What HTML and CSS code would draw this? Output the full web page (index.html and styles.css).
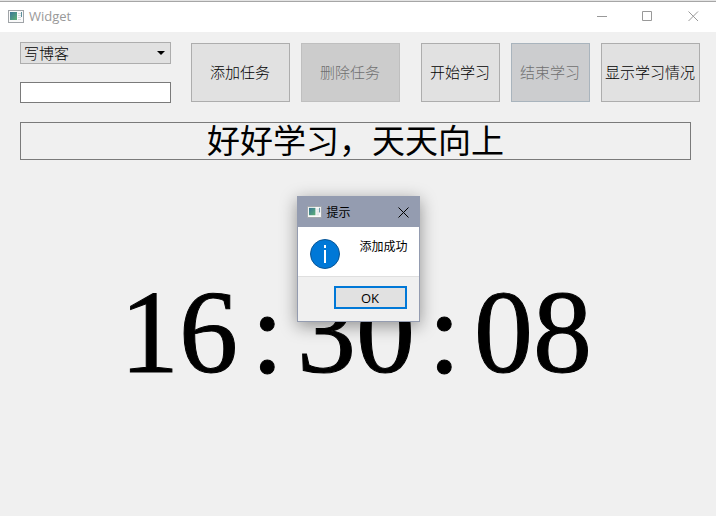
FILE: index.html
```html
<!DOCTYPE html>
<html lang="zh-CN">
<head>
<meta charset="utf-8">
<title>Widget</title>
<link rel="stylesheet" href="styles.css">
</head>
<body>
<svg class="defs" width="0" height="0" aria-hidden="true">
  <defs>
    <linearGradient id="pane" x1="0" y1="0" x2="1" y2="1">
      <stop offset="0" stop-color="#3a7698"/>
      <stop offset="1" stop-color="#5db075"/>
    </linearGradient>
    <symbol id="app" viewBox="0 0 16 13">
      <rect x="0.5" y="0.5" width="15" height="12" fill="#fafafa" stroke="#a0a4a8"/>
      <rect x="2" y="2" width="7" height="8" fill="url(#pane)"/>
      <path d="M10 3.5h3M10 5.5h3M10 7.5h3M10 9.5h3" stroke="#d5dadd"/>
      <path d="M13.5 2v5" stroke="#5a8f9c"/>
    </symbol>
  </defs>
</svg>
<div class="window">
  <header class="titlebar">
    <svg class="app-icon" aria-hidden="true"><use href="#app"/></svg>
    <h1 class="title">Widget</h1>
    <button class="caption" aria-label="最小化"><svg viewBox="0 0 11 11"><path d="M1 5.5h10"/></svg></button>
    <button class="caption" aria-label="最大化"><svg viewBox="0 0 11 11"><path d="M.5 .5h9v9h-9z"/></svg></button>
    <button class="caption" aria-label="关闭"><svg viewBox="0 0 11 11"><path d="M.5 .5l9.500 9.500M10 .5l-9.500 9.500"/></svg></button>
  </header>
  <main class="content">
    <div class="toolbar">
      <div class="fields">
        <div class="combo">
          <select aria-label="任务"><option>写博客</option></select>
          <svg class="arrow" viewBox="0 0 8 4" aria-hidden="true"><path d="M0 0h8L4 4z"/></svg>
        </div>
        <input class="task" type="text" aria-label="新任务">
      </div>
      <div class="group wide">
        <button class="action">添加任务</button>
        <button class="action" disabled>删除任务</button>
      </div>
      <div class="group">
        <button class="action narrow">开始学习</button>
        <button class="action narrow fading" disabled>结束学习</button>
        <button class="action">显示学习情况</button>
      </div>
    </div>
    <p class="motto">好好学习，天天向上</p>
    <div class="clock"><span>16</span><span class="colon">:</span><span>30</span><span class="colon">:</span><span>08</span></div>
  </main>
  <div class="overlay">
    <section class="dialog" role="dialog" aria-labelledby="dialog-title">
      <header class="dialog-bar">
        <svg class="app-icon small" aria-hidden="true"><use href="#app"/></svg>
        <h2 class="dialog-title" id="dialog-title">提示</h2>
        <button class="dialog-close" aria-label="关闭"><svg viewBox="0 0 11 11"><path d="M.5 .5l10 10M10.5 .5l-10 10"/></svg></button>
      </header>
      <div class="dialog-body">
        <svg class="info" viewBox="0 0 30 30" aria-hidden="true">
          <circle cx="15" cy="15" r="14.5" fill="#0078d7" stroke="#0a5595"/>
          <path d="M14 11h2v13h-2zM14 6h2v3h-2z" fill="#fff"/>
        </svg>
        <p class="message">添加成功</p>
      </div>
      <footer class="dialog-foot"><button class="ok">OK</button></footer>
    </section>
  </div>
</div>
</body>
</html>
```
FILE: styles.css
```css
* { box-sizing: border-box; }

body {
  margin: 0;
  background: #f0f0f0;
  color: #000;
  font: 15px/20px "Noto Sans CJK SC", sans-serif;
}

h1, h2, p { margin: 0; font-weight: inherit; }
button, input, select { font: inherit; color: inherit; border-radius: 0; }
.defs { position: absolute; }

.window {
  position: relative;
  display: flex;
  flex-direction: column;
  min-height: 100vh;
}

.titlebar {
  display: flex;
  align-items: center;
  height: 32px;
  padding: 0 0 1px 8px;
  border-top: 1px solid #e4e4e4;
  background: #fff;
  box-shadow: inset 0 1px #a6a6a6;
}

.app-icon { width: 16px; height: 13px; }
.app-icon.small { width: 15px; height: 12px; }

.title {
  flex: 1;
  margin-left: 5px;
  color: #999;
  font: 13px/16px "Open Sans", "Noto Sans", sans-serif;
}

.caption {
  display: grid;
  place-items: center;
  width: 46px;
  height: 28px;
  padding: 0;
  border: 0;
  background: none;
}

.caption svg, .dialog-close svg {
  width: 11px;
  height: 11px;
  fill: none;
  stroke: #999;
}

.content { flex: 1; display: flex; flex-direction: column; padding-top: 10px; }

.toolbar {
  display: flex;
  gap: 20px;
  padding: 0 16px 0 20px;
  font-weight: 300;
}

.fields {
  flex: 1;
  display: flex;
  flex-direction: column;
  gap: 18px;
}

.combo { position: relative; height: 22px; }

.combo select {
  appearance: none;
  display: block;
  width: 100%;
  height: 22px;
  padding: 0 20px 0 3px;
  border: 1px solid #adadad;
  background: #e1e1e1;
  line-height: 20px;
}

.arrow { position: absolute; right: 6px; top: 9px; width: 8px; height: 4px; }

.task {
  width: 100%;
  height: 21px;
  padding: 0 3px;
  border: 1px solid #7a7a7a;
  background: #fff;
}

.group { display: flex; gap: 11px; padding-top: 1px; }
.group.wide { margin-right: 1px; }

.action {
  width: 99px;
  height: 59px;
  padding: 0 1px 2px 0;
  border: 1px solid #adadad;
  background: #e1e1e1;
  white-space: nowrap;
}

.action.narrow { width: 79px; }
.action:disabled { border-color: #bfbfbf; background: #ccc; color: #707070; }
.action.fading:disabled { border-color: #a9b4bd; background: #cccdcf; }

.motto {
  margin: 19px 25px 0 20px;
  padding-bottom: 4px;
  border: 1px solid #7a7a7a;
  font-size: 33px;
  line-height: 32px;
  text-align: center;
}

.clock {
  flex: 1;
  display: flex;
  align-items: center;
  justify-content: center;
  padding: 0 4px 10px 0;
  font: 118px/130px "Liberation Serif", serif;
  -webkit-text-stroke: 1px #000;
}

.colon { width: 59px; text-align: center; }

.overlay {
  position: absolute;
  inset: 0;
  display: grid;
  place-items: center;
  padding-top: 2px;
}

.dialog {
  width: 123px;
  border: 1px solid #949cb0;
  background: #fff;
  box-shadow: 0 4px 16px rgba(0, 0, 0, .4);
  font-size: 12px;
  line-height: 16px;
}

.dialog-bar {
  display: flex;
  align-items: center;
  gap: 5px;
  height: 30px;
  padding-left: 9px;
  background: #949cb0;
}

.dialog-title { flex: 1; font-size: 12px; }

.dialog-close {
  display: grid;
  place-items: center;
  width: 30px;
  height: 30px;
  padding: 0;
  border: 0;
  background: none;
}

.dialog-close svg { stroke: #000; }

.dialog-body {
  display: flex;
  justify-content: space-between;
  height: 49px;
  padding: 12px 11px 7px 12px;
}

.info { width: 30px; height: 30px; }
.message { white-space: nowrap; line-height: 14px; }

.dialog-foot {
  display: flex;
  justify-content: flex-end;
  padding: 9px 12px 12px;
  border-top: 1px solid #dfdfdf;
  background: #f0f0f0;
}

.ok {
  width: 73px;
  height: 23px;
  padding: 0;
  border: 2px solid #0078d7;
  background: #e1e1e1;
  font: 13px/16px "Open Sans", "Noto Sans", sans-serif;
}
```
